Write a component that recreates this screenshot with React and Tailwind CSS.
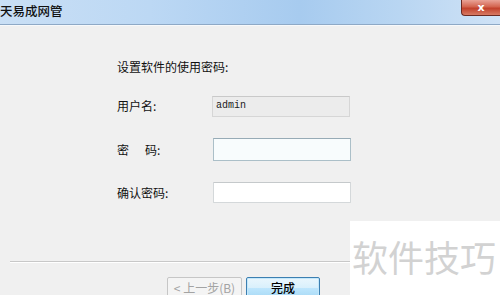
export default function App() {
  const cjk = { fontFamily: '"Noto Sans CJK SC", "Noto Sans", sans-serif' };
  return (
    <div className="relative w-[500px] h-[295px] overflow-hidden bg-[#f0f0f0] text-[12px] text-[#111]" style={cjk}>
      {/* title bar */}
      <div className="relative h-[25px] border-b border-[#8ea9c6] bg-[linear-gradient(90deg,#c9dff5_0%,#bcd8f4_30%,#a7cbef_60%,#b9d6f2_80%,#cfe2f6_100%)] flex items-center">
        <span className="leading-none text-[12.5px] font-medium text-[#111] pb-[2px]">天易成网管</span>
        <div className="absolute right-0 top-0 w-[39px] h-[16px] rounded-bl-[4px] border border-t-0 border-r-0 border-[#6b2a22] bg-[linear-gradient(180deg,#e9a397_0%,#d3644f_45%,#c2412c_55%,#d77a63_100%)] flex items-center justify-center">
          <span className="text-white text-[11px] font-bold leading-none" style={{ fontFamily: '"DejaVu Sans", sans-serif' }}>x</span>
        </div>
      </div>
      <div className="h-[1px] bg-[#f7f9fb]" />
      {/* body */}
      <div className="flex flex-col pl-[117px] pt-[34px]">
        <div className="leading-[14px] h-[14px]">设置软件的使用密码:</div>
        <div className="flex items-center mt-[21px] h-[22px]">
          <span className="w-[95px] leading-none">用户名:</span>
          <div className="w-[138px] h-[21px] bg-[#ececec] border border-[#d6d6d6] border-t-[#c9c9c9] flex items-center pl-[3px]">
            <span className="text-[10px] leading-none text-[#222]" style={{ fontFamily: '"Liberation Mono", monospace' }}>admin</span>
          </div>
        </div>
        <div className="flex items-center mt-[21px] h-[23px]">
          <span className="w-[96px] leading-none flex"><span>密</span><span className="ml-[16px]">码:</span></span>
          <div className="w-[138px] h-[23px] bg-[#f8fcfd] border border-[#abbfc8] border-t-[#97abb6]" />
        </div>
        <div className="flex items-center mt-[21px] h-[21px]">
          <span className="w-[96px] leading-none">确认密码:</span>
          <div className="w-[138px] h-[21px] bg-white border border-[#d4d8da] border-t-[#c5c9cb] rounded-[1px]" />
        </div>
      </div>
      {/* separator */}
      <div className="absolute left-[10px] right-[10px] top-[261px] h-[2px] border-t border-[#c8c8c8] border-b-white border-b" />
      {/* buttons */}
      <div className="absolute left-[167px] top-[277px] flex gap-[4px]">
        <div className="w-[75px] h-[22px] border border-[#c6c6c6] bg-[#f4f4f4] rounded-[2px] flex items-center justify-center text-[#a3a3a3] leading-none">
          &lt; 上一步(B)
        </div>
        <div className="w-[74px] h-[22px] border border-[#3c7fb1] rounded-[2px] bg-[linear-gradient(180deg,#eaf6fd_0%,#d9f0fc_50%,#bee6fd_51%,#a7d9f5_100%)] flex items-center justify-center text-black font-medium leading-none shadow-[inset_0_0_0_1px_#c4e8fb]">
          完成
        </div>
      </div>
      {/* watermark */}
      <div className="absolute left-[350px] top-[221px] right-0 bottom-0 bg-white pl-[2px] pt-[17px]">
        <span className="text-[36px] leading-none text-[#d2d2d2] whitespace-nowrap">软件技巧</span>
      </div>
    </div>
  );
}
